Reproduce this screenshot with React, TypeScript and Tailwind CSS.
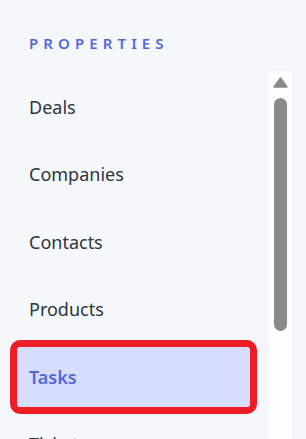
const items = ['Deals', 'Companies', 'Contacts', 'Products', 'Tasks', 'Tickets']

export default function App() {
  const active = 'Tasks'

  return (
    <div className="min-h-screen bg-[#f5f8fb] font-['Noto_Sans',sans-serif] overflow-hidden h-[439px]">
      {/* Section title */}
      <div className="pt-[33px] pl-[29px] text-[15px] leading-[20px] font-semibold tracking-[0.34em] text-[#5567de]">
        PROPERTIES
      </div>

      <div className="flex mt-[18px]">
        {/* Menu list */}
        <div className="w-[269px] flex flex-col gap-[7.5px] pt-[6px]">
          {items.map((item) => (
            <div
              key={item}
              className={`h-[60px] ml-[17px] mr-[19px] pl-[12px] flex items-center rounded-[3px] text-[18px] ${
                item === active
                  ? 'bg-[#d6ddfe] text-[#5567de] font-semibold outline-[7px] outline-solid outline-[#ee1c25]'
                  : 'text-[#2e3440]'
              }`}
            >
              {item}
            </div>
          ))}
        </div>

        {/* Scrollbar */}
        <div className="w-[23px] bg-[#fdfdfd] flex flex-col items-center pt-[6px] h-[400px]">
          <svg width="15" height="11" viewBox="0 0 15 11">
            <path d="M7.5 1 L14 10 L1 10 Z" fill="#888" stroke="#888" strokeWidth="1.5" strokeLinejoin="round" />
          </svg>
          <div className="mt-[10px] w-[13px] h-[233px] rounded-full bg-[#8a8a8a]" />
        </div>
      </div>
    </div>
  )
}
